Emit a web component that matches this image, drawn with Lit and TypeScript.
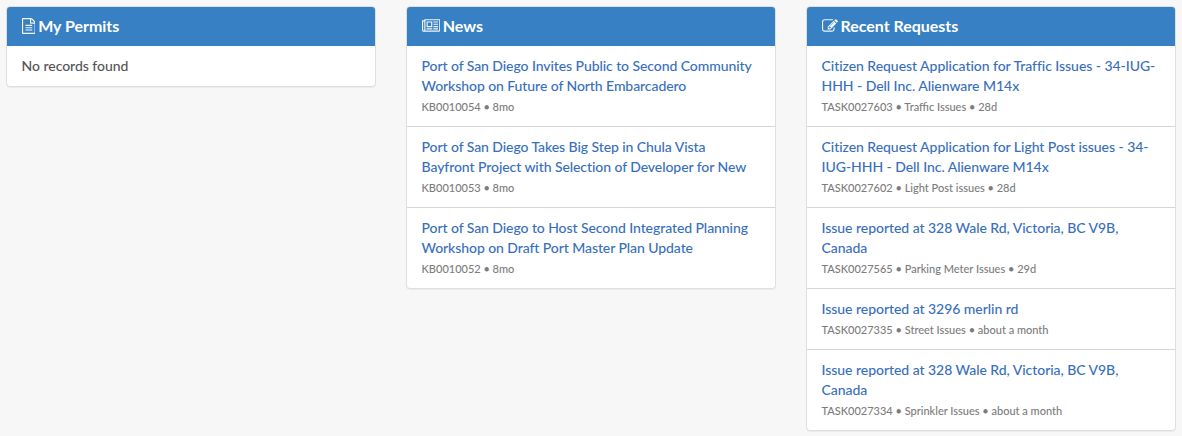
import { LitElement, html, svg, css } from "lit";
import { customElement } from "lit/decorators.js";

interface Item { title: string[]; meta: string; }

const news: Item[] = [
  { title: ["Port of San Diego Invites Public to Second Community", "Workshop on Future of North Embarcadero"], meta: "KB0010054 • 8mo" },
  { title: ["Port of San Diego Takes Big Step in Chula Vista", "Bayfront Project with Selection of Developer for New"], meta: "KB0010053 • 8mo" },
  { title: ["Port of San Diego to Host Second Integrated Planning", "Workshop on Draft Port Master Plan Update"], meta: "KB0010052 • 8mo" },
];

const requests: Item[] = [
  { title: ["Citizen Request Application for Traffic Issues - 34-IUG-", "HHH - Dell Inc. Alienware M14x"], meta: "TASK0027603 • Traffic Issues • 28d" },
  { title: ["Citizen Request Application for Light Post issues - 34-", "IUG-HHH - Dell Inc. Alienware M14x"], meta: "TASK0027602 • Light Post issues • 28d" },
  { title: ["Issue reported at 328 Wale Rd, Victoria, BC V9B,", "Canada"], meta: "TASK0027565 • Parking Meter Issues • 29d" },
  { title: ["Issue reported at 3296 merlin rd"], meta: "TASK0027335 • Street Issues • about a month" },
  { title: ["Issue reported at 328 Wale Rd, Victoria, BC V9B,", "Canada"], meta: "TASK0027334 • Sprinkler Issues • about a month" },
];

// Font Awesome 4 glyphs, on a 1792-unit em with the y axis pointing down.
const icons = {
  file: { w: 1536, d: "M1468 380q28 28 48 76t20 88v1152q0 40-28 68t-68 28H96q-40 0-68-28t-28-68V96q0-40 28-68T96 0h896q40 0 88 20t76 48zm-444-244v376h376q-10-29-22-41l-313-313q-12-12-41-22zm384 1528V640H992q-40 0-68-28t-28-68V128H128v1536h1280zM384 800q0-14 9-23t23-9h704q14 0 23 9t9 23v64q0 14-9 23t-23 9H416q-14 0-23-9t-9-23v-64zm736 224q14 0 23 9t9 23v64q0 14-9 23t-23 9H416q-14 0-23-9t-9-23v-64q0-14 9-23t23-9h704zm0 256q14 0 23 9t9 23v64q0 14-9 23t-23 9H416q-14 0-23-9t-9-23v-64q0-14 9-23t23-9h704z" },
  news: { w: 2048, d: "M1024 512H640v384h384V512zm128 640v128H512v-128h640zm0-768v640H512V384h640zm640 768v128h-512v-128h512zm0-256v128h-512V896h512zm0-256v128h-512V640h512zm0-256v128h-512V384h512zM256 1344V384H128v960q0 26 19 45t45 19 45-19 19-45zm1664 0V256H384v1088q0 33-11 64h1483q26 0 45-19t19-45zM2048 128v1216q0 80-56 136t-136 56H192q-80 0-136-56t-56-136V256h256V128h1792z" },
  edit: { w: 1792, d: "M888 1184l116-116-152-152-116 116v56h96v96h56zm440-720q-16-16-33 1L945 815q-17 17-1 33t33-1l350-350q17-17 1-33zm80 594v190q0 119-84.500 203.500T1120 1536H288q-119 0-203.500-84.500T0 1248V416q0-119 84.500-203.500T288 128h832q63 0 117 25 15 7 18 23 3 17-9 29l-49 49q-14 14-32 8-23-6-45-6H288q-66 0-113 47t-47 113v832q0 66 47 113t113 47h832q66 0 113-47t47-113v-126q0-13 9-22l64-64q15-15 35-7t20 29zm-96-738l288 288-672 672H640V992zm444 132l-92 92-288-288 92-92q28-28 68-28t68 28l152 152q28 28 28 68t-28 68z" },
};

@customElement("app-root")
export class AppRoot extends LitElement {
  static styles = css`
    :host { display: block; box-sizing: border-box; min-height: 436px; padding: 6px 6px 0; background: #f7f7f7;
      font-family: Lato, sans-serif; font-size: 14px; line-height: 20px; color: #555; }
    .columns { display: grid; grid-template-columns: repeat(3, 370px); column-gap: 30px; align-items: start; }
    .panel { box-sizing: border-box; background: #fff; border: 1px solid #dbe1e3; border-radius: 4px; overflow: hidden; box-shadow: 0 1px 1px rgba(0,0,0,.05); }
    .head { display: flex; box-sizing: border-box; align-items: center; gap: 3px; height: 39px; padding: 0 14.500px 1px; background: #3880c4; color: #fff; }
    h2 { margin: 0; font-size: 16px; line-height: 18px; font-weight: 700; letter-spacing: -.03px; }
    svg { display: block; height: 16px; fill: currentColor; opacity: .92; }
    .empty { padding: 10px 14.500px; font-weight: 500; letter-spacing: -.03px; }
    .item { padding: 10px 14px 9px 14.500px; border-top: 1px solid #d5d8d9; }
    .item:first-of-type { border-top: 0; }
    .title { color: #386fbd; white-space: nowrap; font-weight: 500; letter-spacing: -.075px; }
    .requests .title { letter-spacing: -.045px; }
    .meta { color: #7c7c7c; font-size: 11px; line-height: 21px; white-space: nowrap; font-weight: 500; }
  `;

  private head(kind: keyof typeof icons, label: string) {
    const icon = icons[kind];
    return html`<header class="head">
      <svg viewBox="0 0 ${icon.w} 1792" aria-hidden="true">${svg`<path d=${icon.d}></path>`}</svg>
      <h2>${label}</h2>
    </header>`;
  }

  private list(items: Item[]) {
    return items.map((item) => html`<div class="item">
      ${item.title.map((line) => html`<div class="title">${line}</div>`)}
      <div class="meta">${item.meta}</div>
    </div>`);
  }

  render() {
    return html`<main class="columns">
      <section class="panel">${this.head("file", "My Permits")}<div class="empty">No records found</div></section>
      <section class="panel">${this.head("news", "News")}${this.list(news)}</section>
      <section class="panel requests">${this.head("edit", "Recent Requests")}${this.list(requests)}</section>
    </main>`;
  }
}
